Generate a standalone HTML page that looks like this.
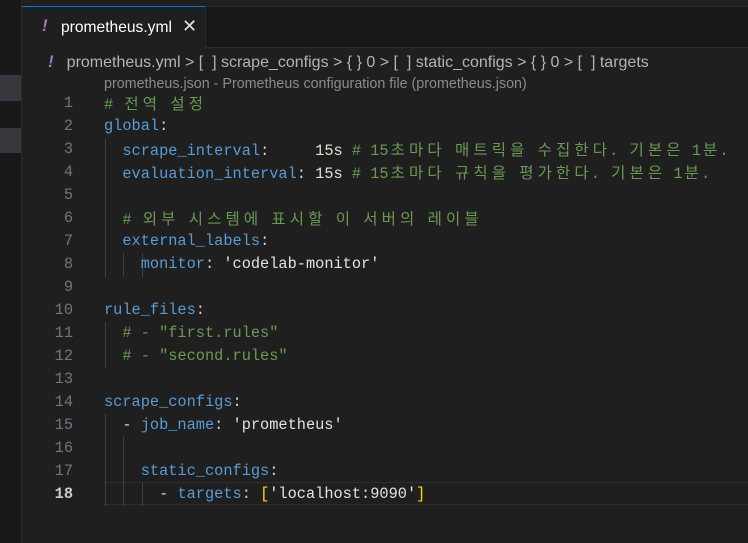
<!DOCTYPE html>
<html><head><meta charset="utf-8"><style>
*{margin:0;padding:0;box-sizing:border-box}
body{width:748px;height:543px;background:#1f1f1f;position:relative;overflow:hidden;font-family:"Liberation Sans","Noto Sans CJK KR",sans-serif}
#side{position:absolute;left:0;top:0;width:22px;height:543px;background:#181818;border-right:1px solid #2b2b2b}
.hl{position:absolute;left:0;width:21px;background:#37373d}
#tabbar{position:absolute;left:22px;top:6px;right:0;height:42px;background:#181818;border-top:1px solid #2b2b2b;border-bottom:1px solid #2b2b2b}
#tab{position:absolute;left:0;top:-1px;width:184px;height:43px;background:#1f1f1f;border-top:1px solid #0078d4;border-right:1px solid #2b2b2b}
#tab .ex{position:absolute;left:20px;top:9px;color:#a074c4;font-style:italic;font-weight:bold;font-size:17px}
#tab .nm{position:absolute;left:39px;top:12px;color:#fff;font-size:15.6px}
#tab .x{position:absolute;left:160px;top:9px;color:#e0e0e0;font-size:18px}
#crumb{position:absolute;left:48px;top:52px;color:#b4b4b4;font-size:16px;white-space:nowrap}
#crumb .ex{color:#a074c4;font-style:italic;font-weight:bold;margin-right:13px;font-size:17px}
#hint{position:absolute;left:104px;top:76px;color:#8b8b8b;font-size:14.3px;white-space:nowrap}
.ln{position:absolute;left:30px;width:43px;text-align:right;font-family:"Liberation Mono",monospace;font-size:15.3px;color:#6e7681;height:23px;line-height:23px}
.cl{position:absolute;left:104px;font-family:"Liberation Mono","Noto Sans CJK KR",monospace;font-size:15.3px;color:#d4d4d4;height:23px;line-height:23px;white-space:pre}
i{display:inline-block;width:18.38px;font-style:normal;text-align:center;font-family:"Noto Sans CJK KR",sans-serif;font-size:15.5px}
.k{color:#569cd6}.c{color:#6a9955}.n{color:#d8e4d0}.s{color:#e2e2e2}.y{color:#ffd700}
.g{position:absolute;width:1px;background:#404040}
#cur{position:absolute;left:104px;right:0;top:482px;height:23px;border-top:1px solid #2e2e2e;border-bottom:1px solid #2e2e2e}
</style></head><body>
<div id="side"><div class="hl" style="top:75px;height:26px"></div><div class="hl" style="top:128px;height:25px"></div></div>
<div id="tabbar"><div id="tab"><span class="ex">!</span><span class="nm">prometheus.yml</span><span class="x">✕</span></div></div>
<div id="crumb"><span class="ex">!</span>prometheus.yml &gt; [&nbsp; ] scrape_configs &gt; { } 0 &gt; [&nbsp; ] static_configs &gt; { } 0 &gt; [&nbsp; ] targets</div>
<div id="hint">prometheus.json - Prometheus configuration file (prometheus.json)</div>
<div id="cur"></div>
<div class="g" style="left:105px;top:139px;height:138px"></div>
<div class="g" style="left:105px;top:322px;height:46px"></div>
<div class="g" style="left:105px;top:414px;height:92px"></div>
<div class="g" style="left:123px;top:253px;height:24px"></div>
<div class="g" style="left:142px;top:253px;height:24px"></div>
<div class="g" style="left:123px;top:436px;height:70px"></div>
<div class="g" style="left:142px;top:482px;height:24px"></div>

<div class="ln" style="top:92px">1</div><div class="cl c" style="top:92px"># <i>전</i><i>역</i> <i>설</i><i>정</i></div>
<div class="ln" style="top:115px">2</div><div class="cl" style="top:115px"><span class="k">global</span>:</div>
<div class="ln" style="top:138px">3</div><div class="cl" style="top:138px">  <span class="k">scrape_interval</span>:     <span class="n">15s</span> <span class="c"># 15<i>초</i><i>마</i><i>다</i> <i>매</i><i>트</i><i>릭</i><i>을</i> <i>수</i><i>집</i><i>한</i><i>다</i>. <i>기</i><i>본</i><i>은</i> 1<i>분</i>.</span></div>
<div class="ln" style="top:161px">4</div><div class="cl" style="top:161px">  <span class="k">evaluation_interval</span>: <span class="n">15s</span> <span class="c"># 15<i>초</i><i>마</i><i>다</i> <i>규</i><i>칙</i><i>을</i> <i>평</i><i>가</i><i>한</i><i>다</i>. <i>기</i><i>본</i><i>은</i> 1<i>분</i>.</span></div>
<div class="ln" style="top:184px">5</div>
<div class="ln" style="top:207px">6</div><div class="cl c" style="top:207px">  # <i>외</i><i>부</i> <i>시</i><i>스</i><i>템</i><i>에</i> <i>표</i><i>시</i><i>할</i> <i>이</i> <i>서</i><i>버</i><i>의</i> <i>레</i><i>이</i><i>블</i></div>
<div class="ln" style="top:230px">7</div><div class="cl" style="top:230px">  <span class="k">external_labels</span>:</div>
<div class="ln" style="top:253px">8</div><div class="cl" style="top:253px">    <span class="k">monitor</span>: <span class="s">'codelab-monitor'</span></div>
<div class="ln" style="top:276px">9</div>
<div class="ln" style="top:299px">10</div><div class="cl" style="top:299px"><span class="k">rule_files</span>:</div>
<div class="ln" style="top:322px">11</div><div class="cl c" style="top:322px">  # - "first.rules"</div>
<div class="ln" style="top:345px">12</div><div class="cl c" style="top:345px">  # - "second.rules"</div>
<div class="ln" style="top:368px">13</div>
<div class="ln" style="top:391px">14</div><div class="cl" style="top:391px"><span class="k">scrape_configs</span>:</div>
<div class="ln" style="top:414px">15</div><div class="cl" style="top:414px">  - <span class="k">job_name</span>: <span class="s">'prometheus'</span></div>
<div class="ln" style="top:437px">16</div>
<div class="ln" style="top:460px">17</div><div class="cl" style="top:460px">    <span class="k">static_configs</span>:</div>
<div class="ln" style="top:483px;color:#cccccc;font-weight:bold">18</div><div class="cl" style="top:483px">      - <span class="k">targets</span>: <span class="y">[</span><span class="s">'localhost:9090'</span><span class="y">]</span></div>
</body></html>
